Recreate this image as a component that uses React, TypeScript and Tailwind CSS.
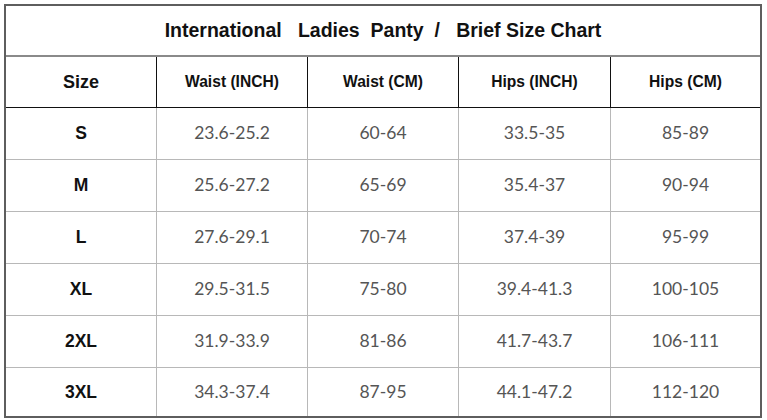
const headers = ["Waist (INCH)", "Waist (CM)", "Hips (INCH)", "Hips (CM)"]

const rows = [
  { size: "S", values: ["23.6-25.2", "60-64", "33.5-35", "85-89"] },
  { size: "M", values: ["25.6-27.2", "65-69", "35.4-37", "90-94"] },
  { size: "L", values: ["27.6-29.1", "70-74", "37.4-39", "95-99"] },
  { size: "XL", values: ["29.5-31.5", "75-80", "39.4-41.3", "100-105"] },
  { size: "2XL", values: ["31.9-33.9", "81-86", "41.7-43.7", "106-111"] },
  { size: "3XL", values: ["34.3-37.4", "87-95", "44.1-47.2", "112-120"] },
]

// widths include the 1px right border of each cell
const colWidths = ["w-[151px]", "w-[151px]", "w-[151px]", "w-[152px]"]

export default function App() {
  return (
    <div className="w-[767px] h-[420px] bg-white pl-[4px] pt-[4px]">
      <div className="w-[758px] h-[414px] border-2 border-[#5e5e5e] flex flex-col font-['Liberation_Sans',Arial,sans-serif]">
        {/* title */}
        <div className="h-[51px] shrink-0 border-b-2 border-[#8a8a8a] flex items-center justify-center">
          <span className="whitespace-pre text-[19.5px] font-bold text-[#111] mt-[1px]">
            {"International   Ladies  Panty  /   Brief Size Chart"}
          </span>
        </div>

        {/* column headers */}
        <div className="h-[51px] shrink-0 border-b border-[#111] flex">
          <div className={`${colWidths[0]} border-r border-[#111] flex items-center justify-center text-[18px] font-bold text-[#111]`}>
            Size
          </div>
          {headers.map((h, i) => (
            <div
              key={h}
              className={
                i < 3
                  ? `${colWidths[i + 1]} border-r border-[#111] flex items-center justify-center text-[15.6px] font-bold text-[#111]`
                  : "flex-1 flex items-center justify-center text-[15.6px] font-bold text-[#111]"
              }
            >
              {h}
            </div>
          ))}
        </div>

        {/* body */}
        {rows.map((r, ri) => (
          <div
            key={r.size}
            className={ri < rows.length - 1 ? "h-[52px] shrink-0 border-b border-[#b8b8b8] flex" : "flex-1 flex"}
          >
            <div className={`${colWidths[0]} border-r border-[#b8b8b8] flex items-center justify-center text-[17.5px] font-bold text-[#111]`}>
              {r.size}
            </div>
            {r.values.map((v, i) => (
              <div
                key={i}
                className={
                  i < 3
                    ? `${colWidths[i + 1]} border-r border-[#b8b8b8] flex items-center justify-center font-['Lato',sans-serif] text-[17.5px] text-[#555]`
                    : "flex-1 flex items-center justify-center font-['Lato',sans-serif] text-[17.5px] text-[#555]"
                }
              >
                {v}
              </div>
            ))}
          </div>
        ))}
      </div>
    </div>
  )
}
